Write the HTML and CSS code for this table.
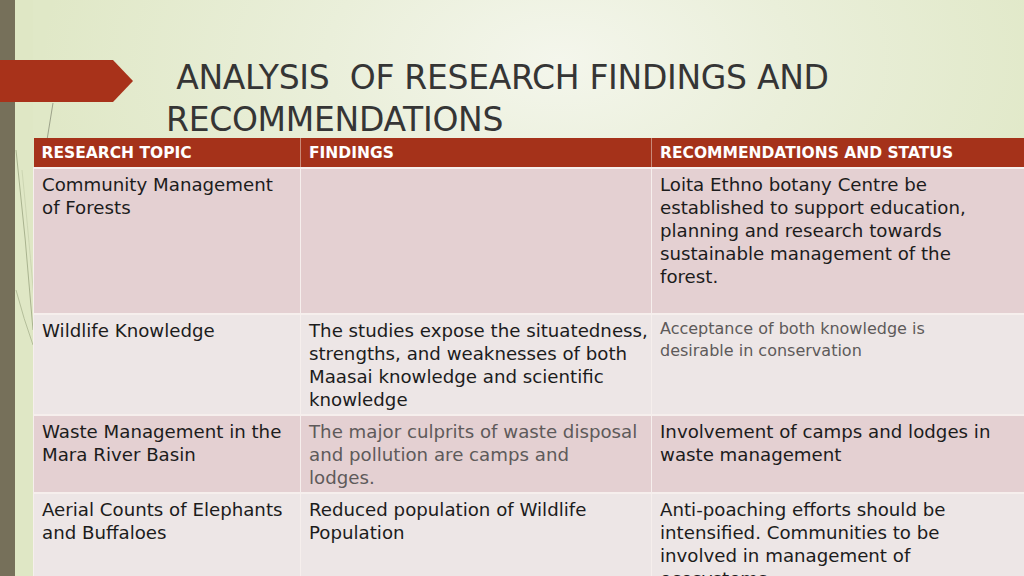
FILE: index.html
```html
<!DOCTYPE html>
<html lang="en">
<head>
<meta charset="utf-8">
<title>Analysis of Research Findings and Recommendations</title>
<link rel="stylesheet" href="styles.css">
</head>
<body>
<div class="slide">
  <div class="side-bar"></div>
  <div class="side-strip"></div>
  <svg class="decor" width="60" height="576" viewBox="0 0 60 576" aria-hidden="true">
    <line x1="53" y1="103" x2="47" y2="140" stroke="#8a8f7a" stroke-width="0.8"/>
    <path d="M16 150 Q26 240 33 330" fill="none" stroke="#a9b38f" stroke-width="1"/>
    <path d="M22 170 Q30 250 34 300" fill="none" stroke="#cdd6b3" stroke-width="1"/>
    <path d="M16 290 Q24 320 33 345" fill="none" stroke="#b4be9a" stroke-width="1"/>
  </svg>
  <div class="arrow"></div>
  <main class="content">
    <h1 class="title"><span class="line1">&nbsp;ANALYSIS&nbsp; OF RESEARCH FINDINGS AND</span><span class="line2">RECOMMENDATIONS</span></h1>
    <table class="grid">
      <colgroup>
        <col class="c1">
        <col class="c2">
        <col class="c3">
      </colgroup>
      <thead>
        <tr>
          <th>RESEARCH TOPIC</th>
          <th>FINDINGS</th>
          <th>RECOMMENDATIONS AND STATUS</th>
        </tr>
      </thead>
      <tbody>
        <tr class="odd r1">
          <td>Community Management<br>of Forests</td>
          <td></td>
          <td>Loita Ethno botany Centre be<br>established to support education,<br>planning and research towards<br>sustainable management of the<br>forest.</td>
        </tr>
        <tr class="even r2">
          <td>Wildlife Knowledge</td>
          <td>The studies expose the situatedness,<br>strengths, and weaknesses of both<br>Maasai knowledge and scientific<br>knowledge</td>
          <td class="muted small">Acceptance of both knowledge is<br>desirable in conservation</td>
        </tr>
        <tr class="odd r3">
          <td>Waste Management in the<br>Mara River Basin</td>
          <td class="muted">The major culprits of waste disposal<br>and pollution are camps and<br>lodges.</td>
          <td>Involvement of camps and lodges in<br>waste management</td>
        </tr>
        <tr class="even r4">
          <td>Aerial Counts of Elephants<br>and Buffaloes</td>
          <td>Reduced population of Wildlife<br>Population</td>
          <td>Anti-poaching efforts should be<br>intensified. Communities to be<br>involved in management of<br>ecosystems</td>
        </tr>
      </tbody>
    </table>
  </main>
</div>
</body>
</html>
```

FILE: styles.css
```css
html, body {
  margin: 0;
  padding: 0;
}

body {
  width: 1024px;
  height: 576px;
  overflow: hidden;
  font-family: "DejaVu Sans", "Liberation Sans", sans-serif;
}

.slide {
  position: relative;
  width: 1024px;
  height: 576px;
  overflow: hidden;
  display: flex;
  background:
    radial-gradient(ellipse 520px 300px at 560px 60px, #f4f6ec 0%, #eaefda 45%, rgba(226,233,203,0) 100%),
    #e0e8c7;
}

.side-bar {
  position: absolute;
  left: 0;
  top: 0;
  width: 15px;
  height: 576px;
  background: #76705a;
}

.side-strip {
  position: absolute;
  left: 15px;
  top: 0;
  width: 18px;
  height: 576px;
  background: #dfe7c5;
}

.decor {
  position: absolute;
  left: 0;
  top: 0;
}

.arrow {
  position: absolute;
  left: 0;
  top: 60px;
  width: 133px;
  height: 42px;
  background: #a8321a;
  clip-path: polygon(0 0, 113px 0, 133px 21px, 113px 42px, 0 42px);
}

.content {
  position: relative;
  margin-left: 33px;
  display: flex;
  flex-direction: column;
}

.title {
  margin: 0;
  padding: 57px 0 0 133px;
  font-family: "DejaVu Sans", sans-serif;
  font-weight: normal;
  font-size: 33px;
  line-height: 42px;
  color: #353535;
  letter-spacing: -0.3px;
  display: flex;
  flex-direction: column;
  height: 81px;
  white-space: nowrap;
}

.grid {
  border-collapse: collapse;
  table-layout: fixed;
  width: 1000px;
  font-size: 18.2px;
  line-height: 23px;
  color: #1c1c1c;
}

.c1 { width: 267px; }
.c2 { width: 351px; }
.c3 { width: 382px; }

.grid th {
  background: #a5321a;
  color: #ffffff;
  font-weight: bold;
  font-size: 15.5px;
  text-align: left;
  height: 27px;
  padding: 2px 8px 0 8px;
  line-height: 27px;
  border-right: 1px solid #c98a78;
  border-bottom: 2px solid #f6efed;
  white-space: nowrap;
}

.grid td {
  vertical-align: top;
  padding: 4px 8px 3px 8px;
  border-right: 1px solid #f6efed;
  border-bottom: 2px solid #f6efed;
  border-left: 1px solid #f6efed;
  white-space: nowrap;
}

.grid .odd td {
  background: #e4d0d2;
}

.grid .even td {
  background: #ede6e6;
}

.r1 td { height: 137px; }
.r2 td { height: 91px; }
.r3 td { height: 69px; }
.r4 td { height: 92px; }

.grid td.muted {
  color: #5e5a5a;
}

.grid td.small {
  font-size: 16px;
  line-height: 22px;
  padding-top: 3px;
}
```
